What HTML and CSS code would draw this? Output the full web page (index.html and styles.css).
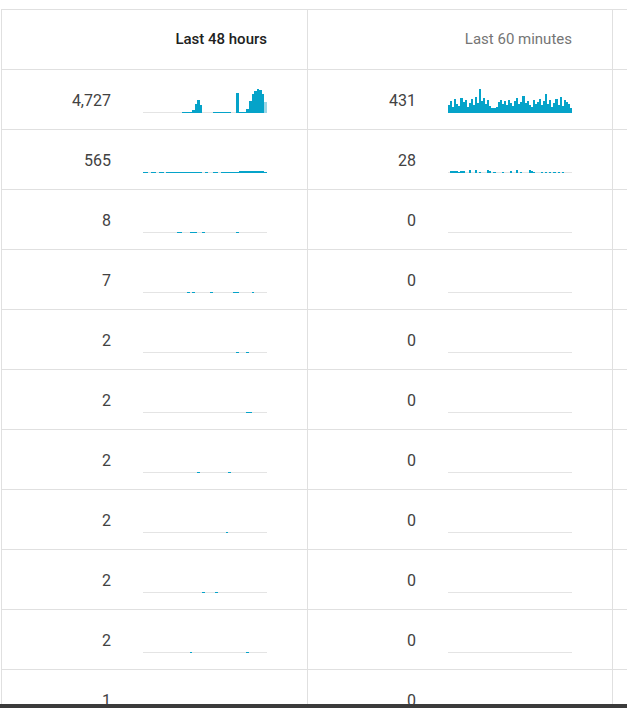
FILE: index.html
```html
<!DOCTYPE html>
<html>
<head>
<meta charset="utf-8">
<link rel="stylesheet" href="styles.css">
</head>
<body>
<div class="table">
  <div class="row head">
    <div class="cell"><span class="title dark">Last 48 hours</span></div>
    <div class="cell"><span class="title">Last 60 minutes</span></div>
    <div class="rest"></div>
  </div>

  <div class="row">
    <div class="cell"><span class="num">4,727</span><span class="spark" data-n="48" data-v="0,0,0,0,0,0,0,0,0,0,0,0,0,0,0,1,1,1,1,3,9,13,8,0,0,0,0,1,1,1,1,1,1,1,0,0,20,1,1,1,4,12,19,22,24,23,19,11" data-last="1"></span></div>
    <div class="cell"><span class="num">431</span><span class="spark" data-n="60" data-v="8,12,6,14,9,7,15,11,13,6,10,14,8,16,10,24,12,15,9,13,7,5,5,6,11,13,9,12,8,13,10,7,12,15,9,11,17,10,12,8,6,13,9,11,14,8,12,19,9,13,6,10,14,8,16,7,13,11,9,5"></span></div>
    <div class="rest"></div>
  </div>

  <div class="row">
    <div class="cell"><span class="num">565</span><span class="spark" data-n="48" data-v="1,1,0,1,1,0,1,1,0,1,1,1,1,1,1,1,1,1,1,1,1,1,1,0,1,0,0,1,1,0,1,1,1,1,1,1,1,2,2,2,2,2,2,2,2,2,2,1"></span></div>
    <div class="cell"><span class="num">28</span><span class="spark" data-n="60" data-v="0,2,2,2,2,1,2,2,0,0,3,0,0,3,0,1,0,0,0,3,2,0,1,0,0,0,1,0,0,0,2,0,0,3,0,1,0,0,0,3,2,1,0,0,0,1,0,1,0,1,0,1,0,1,0,1,0,0,0,0"></span></div>
    <div class="rest"></div>
  </div>

  <div class="row">
    <div class="cell"><span class="num">8</span><span class="spark" data-n="48" data-p="13,14,18,19,20,23,36"></span></div>
    <div class="cell"><span class="num">0</span><span class="spark" data-n="60" data-p=""></span></div>
    <div class="rest"></div>
  </div>

  <div class="row">
    <div class="cell"><span class="num">7</span><span class="spark" data-n="48" data-p="17,19,26,35,36,42"></span></div>
    <div class="cell"><span class="num">0</span><span class="spark" data-n="60" data-p=""></span></div>
    <div class="rest"></div>
  </div>

  <div class="row">
    <div class="cell"><span class="num">2</span><span class="spark" data-n="48" data-p="36,40"></span></div>
    <div class="cell"><span class="num">0</span><span class="spark" data-n="60" data-p=""></span></div>
    <div class="rest"></div>
  </div>

  <div class="row">
    <div class="cell"><span class="num">2</span><span class="spark" data-n="48" data-p="40,41"></span></div>
    <div class="cell"><span class="num">0</span><span class="spark" data-n="60" data-p=""></span></div>
    <div class="rest"></div>
  </div>

  <div class="row">
    <div class="cell"><span class="num">2</span><span class="spark" data-n="48" data-p="21,33"></span></div>
    <div class="cell"><span class="num">0</span><span class="spark" data-n="60" data-p=""></span></div>
    <div class="rest"></div>
  </div>

  <div class="row">
    <div class="cell"><span class="num">2</span><span class="spark" data-n="48" data-p="32"></span></div>
    <div class="cell"><span class="num">0</span><span class="spark" data-n="60" data-p=""></span></div>
    <div class="rest"></div>
  </div>

  <div class="row">
    <div class="cell"><span class="num">2</span><span class="spark" data-n="48" data-p="23,28"></span></div>
    <div class="cell"><span class="num">0</span><span class="spark" data-n="60" data-p=""></span></div>
    <div class="rest"></div>
  </div>

  <div class="row">
    <div class="cell"><span class="num">2</span><span class="spark" data-n="48" data-p="18,40"></span></div>
    <div class="cell"><span class="num">0</span><span class="spark" data-n="60" data-p=""></span></div>
    <div class="rest"></div>
  </div>

  <div class="row">
    <div class="cell"><span class="num">1</span><span class="spark" data-n="48" data-p="30"></span></div>
    <div class="cell"><span class="num">0</span><span class="spark" data-n="60" data-p=""></span></div>
    <div class="rest"></div>
  </div>
</div>
<div class="scrollbar"></div>
<script src="script.js"></script>
</body>
</html>
```

FILE: styles.css
```css
html, body {
  margin: 0;
  padding: 0;
  background: #ffffff;
  overflow: hidden;
}

body {
  font-family: Roboto, "Liberation Sans", Arial, sans-serif;
  color: #424242;
  padding-top: 9px;
  padding-left: 1px;
}

.table {
  border-top: 1px solid #e0e0e0;
  border-left: 1px solid #e0e0e0;
}

.row {
  display: grid;
  grid-template-columns: 306px 305px 1fr;
  height: 59px;
  border-bottom: 1px solid #e0e0e0;
}

.cell {
  display: flex;
  align-items: center;
  justify-content: flex-end;
  padding-right: 40px;
  border-right: 1px solid #e0e0e0;
  min-width: 0;
}

.title {
  font-size: 15px;
  font-weight: 400;
  color: #757575;
  line-height: 20px;
  margin-bottom: 2px;
}

.title.dark {
  color: #212121;
  font-weight: 500;
}

.num {
  flex: 1;
  text-align: right;
  font-size: 16px;
  line-height: 20px;
  color: #424242;
  margin-right: 32px;
  margin-top: 2px;
}

.spark {
  display: block;
  width: 124px;
  height: 30px;
  align-self: flex-start;
  margin-top: 13px;
}

.spark svg {
  display: block;
}

.scrollbar {
  position: fixed;
  left: 0;
  right: 0;
  bottom: 0;
  height: 4px;
  background: #3b3b3b;
}
```

FILE: script.js
```js
document.querySelectorAll('.spark').forEach(function (el) {
  var n = Number(el.dataset.n);
  var vals = [];
  var i;
  if (el.dataset.v) {
    vals = el.dataset.v.split(',').map(Number);
  } else {
    for (i = 0; i < n; i++) vals.push(0);
    if (el.dataset.p) {
      el.dataset.p.split(',').forEach(function (p) {
        vals[Number(p)] = 1;
      });
    }
  }
  var w = 124 / n;
  var ns = 'http://www.w3.org/2000/svg';
  var svg = document.createElementNS(ns, 'svg');
  svg.setAttribute('width', '124');
  svg.setAttribute('height', '30');
  svg.setAttribute('viewBox', '0 0 124 30');
  svg.setAttribute('shape-rendering', 'crispEdges');
  var base = document.createElementNS(ns, 'rect');
  base.setAttribute('x', '0');
  base.setAttribute('y', '29');
  base.setAttribute('width', '124');
  base.setAttribute('height', '1');
  base.setAttribute('fill', '#e4e4e4');
  svg.appendChild(base);
  var last = el.dataset.last === '1';
  vals.forEach(function (h, idx) {
    if (!h) return;
    var r = document.createElementNS(ns, 'rect');
    r.setAttribute('x', (idx * w).toFixed(3));
    r.setAttribute('y', String(30 - h));
    r.setAttribute('width', (w + 0.05).toFixed(3));
    r.setAttribute('height', String(h));
    r.setAttribute('fill', last && idx === n - 1 ? '#9bd7e7' : '#05a3c9');
    svg.appendChild(r);
  });
  el.appendChild(svg);
});
```
